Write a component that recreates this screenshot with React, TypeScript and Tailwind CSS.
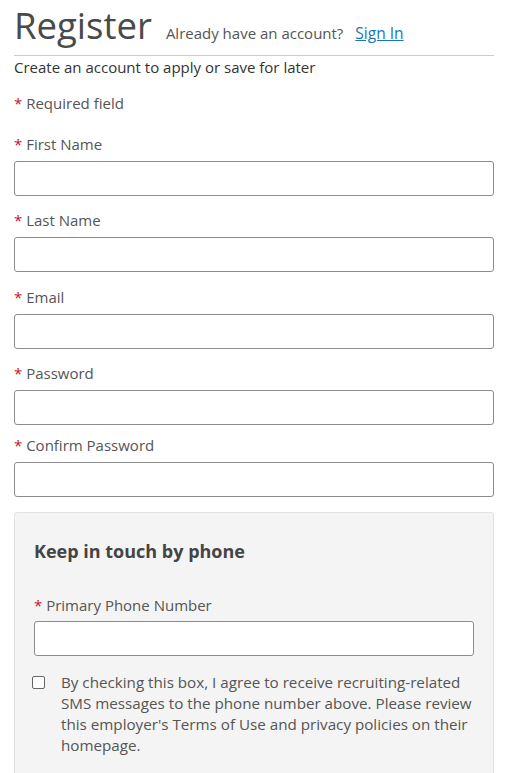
import React from 'react';

const labelCls = 'block text-[15px] leading-5 text-[#555]';

function Field({ label, className = '', gap = 'mt-[7px]' }: { label: string; className?: string; gap?: string }) {
  return (
    <div className={className}>
      <label className={labelCls}>
        <span className="text-[#c8102e]">*</span> {label}
      </label>
      <input
        type="text"
        className={`${gap} block h-[35px] w-full rounded-[3px] border border-[#8c8c8c] bg-white px-2`}
      />
    </div>
  );
}

export default function App() {
  return (
    <div
      className="min-h-screen bg-white pl-[14px] pr-[15px]"
      style={{ fontFamily: '"Open Sans", "Noto Sans", sans-serif' }}
    >
      <div className="flex items-baseline border-b border-[#cccccc] pb-[5px]">
        <h1 className="text-[36.5px] leading-[50px] text-[#4a4a4a]">Register</h1>
        <span className="ml-[14px] text-[15px] text-[#555]">Already have an account?</span>
        <a href="#" className="ml-[12px] text-[15.5px] text-[#1b75bb] underline">
          Sign In
        </a>
      </div>
      <p className="mt-[1px] text-[15px] leading-5 text-[#333]">Create an account to apply or save for later</p>
      <p className="mt-4 text-[15px] leading-5 text-[#555]">
        <span className="text-[#c8102e]">*</span> Required field
      </p>

      <Field label="First Name" className="mt-[21px]" />
      <Field label="Last Name" className="mt-[14px]" />
      <Field label="Email" className="mt-[15px]" />
      <Field label="Password" className="mt-[14px]" />
      <Field label="Confirm Password" className="mt-[10px]" />

      <div className="mt-[15px] rounded-[3px] border border-[#e2e2e2] bg-[#f4f4f4] px-[19px] pb-6 pt-[26px]">
        <h2 className="text-[18px] font-bold leading-6 text-[#444]">Keep in touch by phone</h2>
        <Field label="Primary Phone Number" className="mt-[32px]" gap="mt-[6px]" />
        <div className="mt-4 flex items-start">
          <input
            type="checkbox"
            className="ml-[-2px] mt-[4px] h-[13px] w-[13px] shrink-0 appearance-none rounded-[2px] border border-[#666] bg-white"
          />
          <p className="ml-[16px] text-[15.2px] leading-[21px] text-[#555]">
            By checking this box, I agree to receive recruiting-related SMS messages to the phone number above. Please
            review this employer's Terms of Use and privacy policies on their homepage.
          </p>
        </div>
      </div>
    </div>
  );
}
